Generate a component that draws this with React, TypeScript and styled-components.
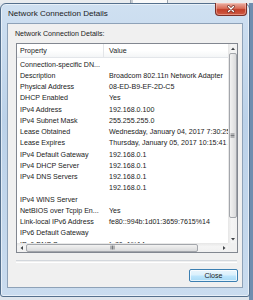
import React from 'react';
import styled, { createGlobalStyle } from 'styled-components';

const Global = createGlobalStyle`
  html, body { margin: 0; padding: 0; }
  body {
    width: 253px; height: 300px; overflow: hidden;
    background: #7d93ab;
    font-family: "Liberation Sans", Arial, sans-serif;
  }
`;

const Desktop = styled.div`
  width: 253px;
  height: 300px;
  display: flex;
  flex-direction: column;
  background: linear-gradient(90deg, #dfe5ec 0 249px, #6f8daf 249px);
`;

const BackStrip = styled.div`
  height: 3px;
  flex: none;
  display: flex;
  background: #e9ecef;
`;

const BackTab = styled.div`
  margin-left: 130px;
  width: 36px;
  border-left: 1px solid #9aa3ad;
  border-right: 1px solid #9aa3ad;
  background: #fafafa;
  box-shadow: inset 2px 0 0 #c7ccd2;
`;

const Window = styled.div`
  width: 250px;
  height: 294px;
  box-sizing: border-box;
  border: 1px solid #55708d;
  border-radius: 6px 6px 3px 3px;
  background: linear-gradient(180deg, #cfe0f1 0%, #bcd2e9 40%, #c3d7ec 75%, #cadcef 100%);
  box-shadow: inset 0 0 0 1px rgba(255,255,255,0.55);
  display: flex;
  flex-direction: column;
  padding: 0 6px 8px 6px;
`;

const TitleBar = styled.div`
  height: 19px;
  flex: none;
  display: flex;
  align-items: flex-start;
`;

const TitleText = styled.div`
  align-self: center;
  font-size: 8.1px;
  color: #1b1b1b;
  padding-left: 1px;
  white-space: nowrap;
`;

const CloseX = styled.div`
  margin-left: auto;
  margin-right: -4px;
  margin-top: -1px;
  width: 32px;
  height: 13px;
  box-sizing: border-box;
  border: 1px solid #7a3028;
  border-top: none;
  border-radius: 0 0 4px 4px;
  background: linear-gradient(180deg, #eab0a4 0%, #d96d58 45%, #c2402a 55%, #cf5a44 100%);
  box-shadow: inset 0 0 0 1px rgba(255,210,200,0.45);
  display: flex;
  align-items: center;
  justify-content: center;
`;

const Client = styled.div`
  flex: 1;
  background: #f0f0f0;
  border: 1px solid #8ea2b8;
  display: flex;
  flex-direction: column;
  padding: 5px 4px 0 8px;
`;

const GroupLabel = styled.div`
  font-size: 7.1px;
  line-height: 10px;
  height: 10px;
  margin-left: -1px;
  color: #1b1b1b;
  white-space: nowrap;
`;

const ListView = styled.div`
  margin-top: 4px;
  height: 210px;
  box-sizing: border-box;
  border: 1px solid #828790;
  background: #fff;
  display: grid;
  grid-template-columns: 1fr 9px;
  grid-template-rows: 1fr 9px;
  flex: none;
`;

const ListContent = styled.div`
  overflow: hidden;
  display: flex;
  flex-direction: column;
  font-size: 7.1px;
  color: #1b1b1b;
`;

const Header = styled.div`
  height: 14px;
  flex: none;
  display: grid;
  grid-template-columns: 87px 1fr;
  background: linear-gradient(180deg, #ffffff 0%, #ffffff 50%, #f4f6f7 100%);
  border-bottom: 1px solid #e3e6ea;
  box-sizing: border-box;
`;

const HeaderCell = styled.div<{ $divider?: boolean }>`
  display: flex;
  align-items: center;
  padding-left: ${p => (p.$divider ? '3px' : '3px')};
  border-right: ${p => (p.$divider ? '1px solid #e3e5e8' : 'none')};
  white-space: nowrap;
`;

const HeaderValue = styled(HeaderCell)`
  padding-left: 5px;
`;

const Rows = styled.div`
  padding-top: 1px;
  display: flex;
  flex-direction: column;
`;

const Row = styled.div`
  height: 11.25px;
  flex: none;
  display: grid;
  grid-template-columns: 87px 1fr;
  align-items: center;
  white-space: nowrap;
`;

const PropCell = styled.div`
  padding-left: 3px;
  overflow: hidden;
`;

const ValueCell = styled.div`
  padding-left: 5px;
  overflow: hidden;
`;

const VScroll = styled.div`
  display: flex;
  flex-direction: column;
  background: linear-gradient(90deg, #e6e6e6, #f5f5f5 40%, #f0f0f0);
`;

const HScroll = styled.div`
  display: flex;
  background: linear-gradient(180deg, #e6e6e6, #f5f5f5 40%, #f0f0f0);
`;

const ArrowBox = styled.div`
  width: 9px;
  height: 9px;
  flex: none;
  display: flex;
  align-items: center;
  justify-content: center;
`;

const VThumb = styled.div`
  height: 165px;
  flex: none;
  margin: 0 0.5px;
  box-sizing: border-box;
  border: 1px solid #a3a6ab;
  border-radius: 2px;
  background: linear-gradient(90deg, #f2f2f2, #e6e6e6 50%, #d9dadc);
  display: flex;
  align-items: center;
  justify-content: center;
`;

const HThumb = styled.div`
  width: 172px;
  flex: none;
  margin: 0.5px 0;
  box-sizing: border-box;
  border: 1px solid #a3a6ab;
  border-radius: 2px;
  background: linear-gradient(180deg, #f2f2f2, #e6e6e6 50%, #d9dadc);
  display: flex;
  align-items: center;
  justify-content: center;
`;

const Spacer = styled.div`
  flex: 1;
`;

const Corner = styled.div`
  background: #f0f0f0;
`;

const Separator = styled.div`
  margin-top: 7px;
  height: 1px;
  border-top: 1px solid #d3d7dc;
  border-bottom: 1px solid #ffffff;
  margin-right: 1px;
  flex: none;
`;

const Footer = styled.div`
  margin-top: 6px;
  display: flex;
  justify-content: flex-end;
`;

const DialogButton = styled.button`
  width: 49px;
  height: 13px;
  padding: 0;
  margin: 0 0 0 0;
  box-sizing: border-box;
  border: 1px solid #3c7fb1;
  border-radius: 2px;
  background: linear-gradient(180deg, #eaf6fd 0%, #d9f0fc 48%, #bee6fd 52%, #a7d9f5 100%);
  box-shadow: inset 0 0 0 1px rgba(255,255,255,0.7);
  font-family: "Liberation Sans", Arial, sans-serif;
  font-size: 7.1px;
  color: #1b1b1b;
  display: flex;
  align-items: center;
  justify-content: center;
`;

const Arrow = ({ dir }: { dir: 'up' | 'down' | 'left' | 'right' }) => {
  const pts = {
    up: '1,4 3,1.5 5,4',
    down: '1,2 3,4.5 5,2',
    left: '4,1 1.5,3 4,5',
    right: '2,1 4.5,3 2,5',
  }[dir];
  return (
    <svg width="6" height="6" viewBox="0 0 6 6">
      <polygon points={pts} fill="#404448" />
    </svg>
  );
};

const rows: [string, string][] = [
  ['Connection-specific DN...', ''],
  ['Description', 'Broadcom 802.11n Network Adapter'],
  ['Physical Address', '08-ED-B9-EF-2D-C5'],
  ['DHCP Enabled', 'Yes'],
  ['IPv4 Address', '192.168.0.100'],
  ['IPv4 Subnet Mask', '255.255.255.0'],
  ['Lease Obtained', 'Wednesday, January 04, 2017 7:30:25 PM'],
  ['Lease Expires', 'Thursday, January 05, 2017 10:15:41 AM'],
  ['IPv4 Default Gateway', '192.168.0.1'],
  ['IPv4 DHCP Server', '192.168.0.1'],
  ['IPv4 DNS Servers', '192.168.0.1'],
  ['', '192.168.0.1'],
  ['IPv4 WINS Server', ''],
  ['NetBIOS over Tcpip En...', 'Yes'],
  ['Link-local IPv6 Address', 'fe80::994b:1d01:3659:7615%14'],
  ['IPv6 Default Gateway', ''],
  ['IPv6 DNS Server', 'fe80::1%14'],
  ['', ''],
];

export default function App() {
  return (
    <>
      <Global />
      <Desktop>
        <BackStrip>
          <BackTab />
        </BackStrip>
        <Window>
          <TitleBar>
            <TitleText>Network Connection Details</TitleText>
            <CloseX>
              <svg width="10" height="8" viewBox="0 0 10 8">
                <path d="M2.5 1.5 L7.5 6.5 M7.5 1.5 L2.5 6.5" stroke="#6b2a22" strokeWidth="2.6" strokeLinecap="round" />
                <path d="M2.5 1.5 L7.5 6.5 M7.5 1.5 L2.5 6.5" stroke="#ffffff" strokeWidth="1.4" strokeLinecap="round" />
              </svg>
            </CloseX>
          </TitleBar>
          <Client>
            <GroupLabel>Network Connection Details:</GroupLabel>
            <ListView>
              <ListContent>
                <Header>
                  <HeaderCell $divider>Property</HeaderCell>
                  <HeaderValue>Value</HeaderValue>
                </Header>
                <Rows>
                  {rows.map(([p, v], i) => (
                    <Row key={i}>
                      <PropCell>{p}</PropCell>
                      <ValueCell>{v}</ValueCell>
                    </Row>
                  ))}
                </Rows>
              </ListContent>
              <VScroll>
                <ArrowBox><Arrow dir="up" /></ArrowBox>
                <VThumb>
                  <svg width="5" height="5" viewBox="0 0 5 5">
                    <path d="M0.5 1 H4.5 M0.5 2.5 H4.5 M0.5 4 H4.5" stroke="#5a5e63" strokeWidth="0.8" />
                  </svg>
                </VThumb>
                <Spacer />
                <ArrowBox><Arrow dir="down" /></ArrowBox>
              </VScroll>
              <HScroll>
                <ArrowBox><Arrow dir="left" /></ArrowBox>
                <HThumb>
                  <svg width="5" height="5" viewBox="0 0 5 5">
                    <path d="M1 0.5 V4.5 M2.5 0.5 V4.5 M4 0.5 V4.5" stroke="#5a5e63" strokeWidth="0.8" />
                  </svg>
                </HThumb>
                <Spacer />
                <ArrowBox><Arrow dir="right" /></ArrowBox>
              </HScroll>
              <Corner />
            </ListView>
            <Separator />
            <Footer>
              <DialogButton>Close</DialogButton>
            </Footer>
          </Client>
        </Window>
      </Desktop>
    </>
  );
}
